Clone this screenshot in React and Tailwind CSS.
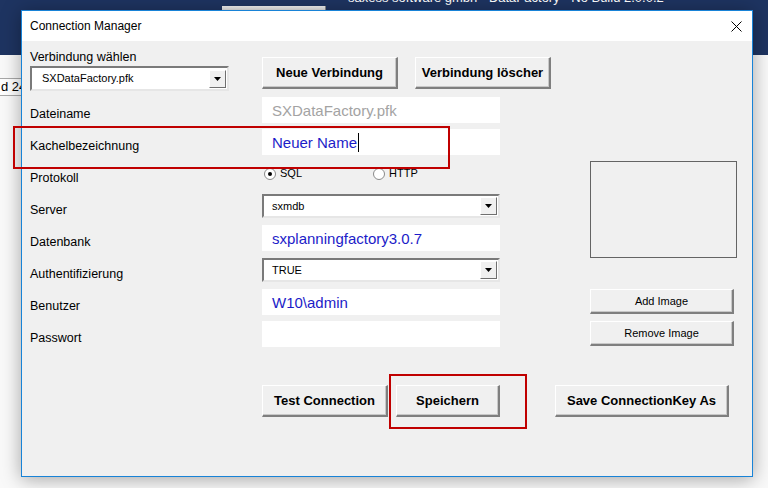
import React from 'react';

const font = { fontFamily: '"Liberation Sans", Arial, sans-serif' };

const Button = ({ children, className = '' }) => (
  <div
    className={`flex items-center justify-center bg-[#f0f0f0] text-black border-t border-l border-t-white border-l-white border-b-2 border-r-2 border-b-[#7f7f7f] border-r-[#7f7f7f] shadow-[inset_-1px_-1px_0_#c8c8c8] ${className}`}
  >
    {children}
  </div>
);

const DropArrow = () => (
  <div className="w-[17px] h-[18px] mr-[1px] flex items-center justify-center bg-[#f0f0f0] border-t border-l border-t-white border-l-white border-b border-r border-b-[#6f6f6f] border-r-[#6f6f6f]">
    <svg width="7" height="4" viewBox="0 0 7 4">
      <polygon points="0,0 7,0 3.5,4" fill="#000" />
    </svg>
  </div>
);

const Combo = ({ value, className = '', textClass = '' }) => (
  <div
    className={`flex items-center bg-white border-t-2 border-l-2 border-t-[#7a7a7a] border-l-[#7a7a7a] border-b-2 border-r-2 border-b-[#e6e6e6] border-r-[#e6e6e6] ${className}`}
  >
    <span className={`flex-1 text-[11px] text-black ${textClass}`}>{value}</span>
    <DropArrow />
  </div>
);

const Field = ({ children }) => (
  <div className="w-[238px] h-[26px] bg-white flex items-center pl-[10px] text-[15px] leading-none">
    {children}
  </div>
);

const Radio = ({ checked, label }) => (
  <div className="flex items-center gap-[4px]">
    <div className="w-[12px] h-[12px] rounded-full bg-white border border-[#8a8a8a] flex items-center justify-center">
      {checked && <div className="w-[4px] h-[4px] rounded-full bg-black" />}
    </div>
    <span className="text-[11px] text-black">{label}</span>
  </div>
);

const rows = [
  'Dateiname',
  'Kachelbezeichnung',
  'Protokoll',
  'Server',
  'Datenbank',
  'Authentifizierung',
  'Benutzer',
  'Passwort',
];

export default function App() {
  const fields = {
    Dateiname: (
      <Field>
        <span className="text-[#a3a3a3]">SXDataFactory.pfk</span>
      </Field>
    ),
    Kachelbezeichnung: (
      <Field>
        <span className="text-[#1c1cc8]">Neuer Name</span>
        <span className="w-px h-[19px] bg-black ml-[1px]" />
      </Field>
    ),
    Protokoll: (
      <div className="flex items-center gap-[71px] pl-[2px] -mt-[1px]">
        <Radio checked label="SQL" />
        <Radio label="HTTP" />
      </div>
    ),
    Server: <Combo value="sxmdb" className="w-[238px] h-[24px]" textClass="pl-[8px]" />,
    Datenbank: (
      <Field>
        <span className="text-[#1c1cc8]">sxplanningfactory3.0.7</span>
      </Field>
    ),
    Authentifizierung: <Combo value="TRUE" className="w-[238px] h-[24px]" textClass="pl-[8px]" />,
    Benutzer: (
      <Field>
        <span className="text-[#1c1cc8]">W10\admin</span>
      </Field>
    ),
    Passwort: <Field />,
  };

  return (
    <div className="relative w-[768px] h-[488px] overflow-hidden bg-[#f9f9f9]" style={font}>
      {/* desktop behind the dialog */}
      <div className="h-[55px] bg-[#1e3461] relative overflow-hidden">
        <div className="absolute left-[222px] top-[6px] w-[104px] h-[6px] bg-gradient-to-b from-[#f2f2f2] to-[#d8d8d8] border-r border-r-[#8a8a8a]" />
        <div className="absolute left-[348px] -top-[12px] text-white text-[13px] whitespace-nowrap">
          saxess software gmbh - DataFactory - No Build 2.0.0.2
        </div>
      </div>
      <div className="mt-[23px] w-[40px] h-[18px] -ml-[18px] bg-white border border-[#a8a8a8] flex items-center pl-[18px] text-[13px] text-black whitespace-nowrap">
        d 24
      </div>

      {/* dialog window */}
      <div className="absolute left-[21px] top-[10px] w-[732px] h-[467px] border border-[#1883d7] bg-[#f0f0f0] shadow-[0_2px_18px_rgba(0,0,0,0.35)] flex flex-col">
        <div className="h-[30px] bg-white flex items-center justify-between pl-[8px] pr-[10px]">
          <span className="text-[12px] text-black">Connection Manager</span>
          <svg width="11" height="11" viewBox="0 0 11 11">
            <path d="M0.5 0.5 L10.5 10.5 M10.5 0.5 L0.5 10.5" stroke="#000" strokeWidth="1" />
          </svg>
        </div>

        <div className="pl-[8px] flex flex-col text-[12.5px] text-black">
          {/* top section */}
          <div className="h-[53px] flex">
            <div className="w-[232px] flex flex-col pt-[8px]">
              <span className="leading-[16px]">Verbindung wählen</span>
              <Combo value="SXDataFactory.pfk" className="w-[199px] h-[25px] mt-px" textClass="pl-[10px]" />
            </div>
            <div className="flex gap-[17px] pt-[16px]">
              <Button className="w-[136px] h-[32px] font-bold text-[13px]">Neue Verbindung</Button>
              <Button className="w-[136px] h-[32px] font-bold text-[13px]">Verbindung löscher</Button>
            </div>
          </div>

          {/* fields */}
          <div className="flex">
            <div className="flex flex-col">
              {rows.map((r) => (
                <div key={r} className="h-[32px] flex items-center">
                  <div className="w-[232px] pt-[7px] leading-[16px]">{r}</div>
                  {fields[r]}
                </div>
              ))}
            </div>
            <div className="ml-[90px] w-[146px] flex flex-col pt-[67px]">
              <div className="w-[147px] h-[97px] border border-[#646464]" />
              <Button className="w-[144px] h-[25px] mt-[31px] text-[11px]">Add Image</Button>
              <Button className="w-[144px] h-[25px] mt-[7px] text-[11px]">Remove Image</Button>
            </div>
          </div>

          {/* bottom buttons */}
          <div className="flex mt-[35px] pl-[232px]">
            <Button className="w-[126px] h-[32px] font-bold text-[13px]">Test Connection</Button>
            <Button className="w-[104px] h-[32px] ml-[8px] font-bold text-[13px]">Speichern</Button>
            <Button className="w-[174px] h-[32px] ml-[55px] font-bold text-[13px]">Save ConnectionKey As</Button>
          </div>
        </div>
      </div>

      {/* red highlight frames */}
      <div className="absolute left-[13px] top-[126px] w-[437px] h-[43px] border-2 border-[#c00000]" />
      <div className="absolute left-[389px] top-[374px] w-[138px] h-[55px] border-2 border-[#c00000]" />
    </div>
  );
}
